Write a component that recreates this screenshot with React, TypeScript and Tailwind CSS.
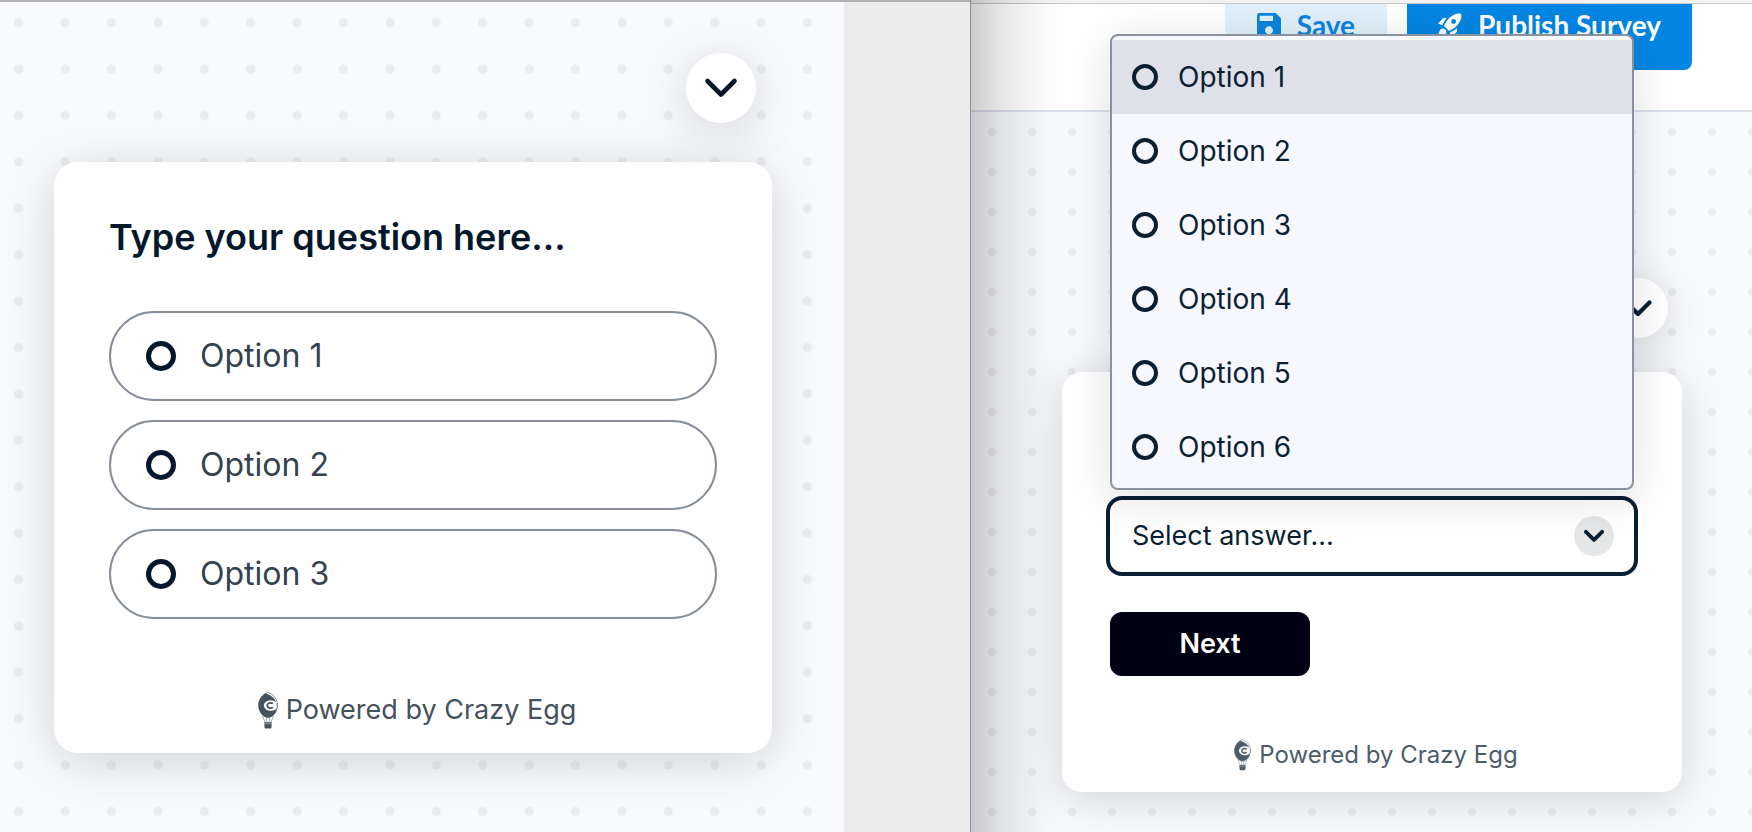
import { useId, useState } from "react";

const INLINE_OPTIONS = ["Option 1", "Option 2", "Option 3"];
const MENU_OPTIONS = ["Option 1", "Option 2", "Option 3", "Option 4", "Option 5", "Option 6"];

type DotGridProps = {
  size: number;
  cx: number;
  cy: number;
  r: number;
};

function DotGrid({ size, cx, cy, r }: DotGridProps) {
  const id = useId();

  return (
    <svg className="absolute inset-0 h-full w-full" aria-hidden="true">
      <defs>
        <pattern id={id} width={size} height={size} patternUnits="userSpaceOnUse">
          <circle cx={cx} cy={cy} r={r} fill="#ebecf0" />
        </pattern>
      </defs>
      <rect width="100%" height="100%" fill={`url(#${id})`} />
    </svg>
  );
}

function Chevron({ className, strokeWidth = 4.6 }: { className: string; strokeWidth?: number }) {
  return (
    <svg className={className} viewBox="0 0 32 20" fill="none" stroke="currentColor" strokeWidth={strokeWidth} overflow="visible" aria-hidden="true">
      <path strokeLinecap="round" strokeLinejoin="round" d="M2.5 3 16 16.5 29.5 3" />
    </svg>
  );
}

function BalloonLogo({ className }: { className: string }) {
  return (
    <svg className={className} viewBox="0 0 20 37" fill="none" aria-hidden="true">
      <path d="M10 .6c5.4 1 9.4 7 9.4 12.6 0 5.5-3.7 12.3-9.4 12.3S.6 18.7.6 13.2C.6 7.6 4.600 1.600 10 .6z" stroke="currentColor" strokeWidth={0.6} />
      <path d="M7.500 1.600C12.500 3 16.500 6 18 10l.6 8C17 22.500 14 25.500 10 25.500 4.300 25.500.5 18.700.5 13.200.5 8.400 3.600 3.400 7.500 1.600z" fill="currentColor" />
      <ellipse cx="12.800" cy="13.500" rx="7" ry="5.200" fill="#fff" />
      <path d="M15 11.600c-3-1.400-5.800-.4-5.800 1.900s2.800 3.300 5.800 1.900" stroke="currentColor" strokeWidth={1.700} />
      <path d="M19.200 11v5" stroke="currentColor" strokeWidth={0.8} />
      <path d="M4.500 24 7.300 30.500M15.500 24l-2.800 6.500M8.500 25.500l.3 5M11.500 25.500l-.3 5" stroke="currentColor" strokeWidth={0.5} />
      <path d="M6.200 30.200h7.600l-.4 5.200c0 .6-.5 1-1.200 1H7.800c-.7 0-1.200-.4-1.200-1z" fill="currentColor" />
      <path d="M6.500 31.700h7" stroke="#fff" strokeWidth={0.4} />
    </svg>
  );
}

function SaveIcon() {
  return (
    <svg className="size-6" viewBox="3 3 18 18" fill="currentColor" aria-hidden="true">
      <path d="M17 3H5a2 2 0 0 0-2 2v14a2 2 0 0 0 2 2h14c1.100 0 2-.9 2-2V7l-4-4zm-5 16c-1.660 0-3-1.340-3-3s1.340-3 3-3 3 1.340 3 3-1.340 3-3 3zm3-10H5V5h10v4z" />
    </svg>
  );
}

function RocketIcon() {
  return (
    <svg className="size-6" viewBox="2 2 20 20" fill="currentColor" aria-hidden="true">
      <path d="M9.190 6.350c-2.040 2.290-3.440 5.580-3.570 5.890L2 10.690l4.050-4.050c.47-.47 1.150-.68 1.810-.55l1.330.26zM11.170 17s3.740-1.550 5.890-3.700c5.400-5.400 4.500-9.620 4.210-10.570-.95-.3-5.170-1.190-10.570 4.210C8.550 9.090 7 12.830 7 12.830L11.170 17zm6.480-2.190c-2.290 2.040-5.580 3.440-5.890 3.570L13.310 22l4.050-4.050c.47-.47.68-1.150.55-1.810l-.26-1.330zM9 18c0 .83-.34 1.580-.88 2.120C6.940 21.300 2 22 2 22s.7-4.940 1.880-6.120A2.996 2.996 0 0 1 9 18zm4-9c0-1.100.9-2 2-2s2 .9 2 2-.9 2-2 2-2-.9-2-2z" />
    </svg>
  );
}

function RadioSurvey() {
  const [answer, setAnswer] = useState("");

  return (
    <section className="flex border-t-2 border-[#b0b0b0] bg-[#ebebeb]">
      <div className="relative flex-[844] bg-[#f9fafe]">
        <DotGrid size={46.4} cx={18.7} cy={20.7} r={4.7} />

        <div className="relative flex flex-col pt-[51px] pr-[72px] pl-[54px]">
          <button
            type="button"
            aria-label="Minimize survey"
            className="mr-4 flex size-[70px] items-center justify-center self-end rounded-full bg-white text-[#04172b] shadow-[0_8px_52px_rgba(0,0,0,0.16)]"
          >
            <Chevron className="h-5 w-8" />
          </button>

          <form className="mt-[39px] rounded-3xl bg-white px-[55px] pt-[51px] pb-[23px] shadow-[0_8px_52px_rgba(0,0,0,0.16)]">
            <h2 className="text-[36px] leading-[48px] font-semibold text-[#04172b]">Type your question here...</h2>

            <div className="mt-[50px] flex flex-col gap-[19px]">
              {INLINE_OPTIONS.map(option => (
                <label key={option} className="flex h-[90px] items-center gap-6 rounded-full border-2 border-[#868e99] pl-[35px] text-[32px] text-[#34424f]">
                  <input
                    type="radio"
                    name="inline-answer"
                    checked={answer === option}
                    onChange={() => setAnswer(option)}
                    className="size-[30px] appearance-none rounded-full border-[5px] border-[#04172b] checked:bg-[#04172b]"
                  />
                  {option}
                </label>
              ))}
            </div>

            <p className="mt-[71px] flex items-center justify-center gap-2 pl-2 text-[27px] leading-[40px] text-[#44515e]">
              <BalloonLogo className="h-[37px] w-5" />
              Powered by Crazy Egg
            </p>
          </form>
        </div>
      </div>
      <div className="flex-[126]" />
    </section>
  );
}

function DropdownSurvey() {
  const [isOpen, setIsOpen] = useState(true);
  const [answer, setAnswer] = useState("");

  const choose = (option: string) => {
    setAnswer(option);
    setIsOpen(false);
  };

  return (
    <section className="relative flex flex-col border-l border-[#8f929b] bg-[#f9fafe]">
      <div className="h-1 border-b border-[#c9c9c9] bg-[#f3f3f3]" />
      <header className="flex h-[108px] items-start justify-end gap-5 border-b-2 border-[#dde1ee] bg-white pr-[60px] font-['Lato',sans-serif] text-[28px] font-bold">
        <button type="button" className="flex h-[66px] items-center gap-4 rounded-b-lg bg-[#e1f0fa] px-8 pb-6 text-[#0b84e0]">
          <SaveIcon />
          Save
        </button>
        <button type="button" className="flex h-[66px] items-center gap-4 rounded-b-lg bg-[#0386e4] px-[31px] pb-6 text-white">
          <RocketIcon />
          Publish Survey
        </button>
      </header>

      <div className="relative flex-1">
        <DotGrid size={40} cx={21} cy={20} r={4} />

        <div className="relative flex flex-col pt-[166px] pr-[70px] pb-10 pl-[91px]">
          <button
            type="button"
            aria-label="Minimize survey"
            className="mr-[14px] flex size-[60px] items-center justify-center self-end rounded-full bg-white text-[#0b1f33] shadow-[0_7px_45px_rgba(0,0,0,0.16)]"
          >
            <Chevron className="h-[17px] w-7" strokeWidth={5} />
          </button>

          <form className="mt-[34px] rounded-[20px] bg-white px-11 pt-[124px] pb-[19px] shadow-[0_7px_45px_rgba(0,0,0,0.16)]">
            <div className="relative">
              <div className="flex h-20 items-center rounded-2xl border-4 border-[#0b1f33] pr-5 pl-[22px]">
                <select
                  aria-label="Select answer"
                  value={answer}
                  onMouseDown={event => {
                    event.preventDefault();
                    setIsOpen(open => !open);
                  }}
                  onChange={event => setAnswer(event.target.value)}
                  className="min-w-0 flex-1 appearance-none bg-transparent text-[27px] text-[#0b1f33] outline-none"
                >
                  <option value="">Select answer...</option>
                  {MENU_OPTIONS.map(option => (
                    <option key={option}>{option}</option>
                  ))}
                </select>
                <span className="flex size-10 items-center justify-center rounded-full bg-[#e5e7e9] text-[#0b1f33]">
                  <Chevron className="h-3 w-5" strokeWidth={6.4} />
                </span>
              </div>

              {isOpen && (
                <div className="absolute inset-x-1 bottom-full mb-[6px] rounded-lg border-2 border-[#8a92a0] bg-[#f6f8fd] py-1 shadow-[0_8px_50px_rgba(0,0,0,0.13)]">
                  {MENU_OPTIONS.map((option, index) => (
                    <label
                      key={option}
                      className={`flex h-[74px] items-center gap-5 pl-5 text-[28px] text-[#0b1f33] ${index === 0 ? "bg-[#dee1e9]" : "hover:bg-[#dee1e9]"}`}
                    >
                      <input
                        type="radio"
                        name="menu-answer"
                        checked={answer === option}
                        onChange={() => choose(option)}
                        className="size-[26px] appearance-none rounded-full border-4 border-[#0b1f33] checked:bg-[#0b1f33]"
                      />
                      {option}
                    </label>
                  ))}
                </div>
              )}
            </div>

            <button type="button" className="mt-9 ml-1 h-16 w-[200px] rounded-xl bg-[#000112] text-[27px] font-semibold text-white">
              Next
            </button>

            <p className="mt-[61px] flex items-center justify-center gap-2 pl-2 text-[24px] leading-9 text-[#4e5c6a]">
              <BalloonLogo className="h-8 w-[17px]" />
              Powered by Crazy Egg
            </p>
          </form>
        </div>
      </div>

      {/* shade cast by the window on the left */}
      <div className="pointer-events-none absolute inset-y-0 left-0 w-24 bg-[linear-gradient(to_right,rgba(0,0,0,0.2),rgba(0,0,0,0.09)_35%,rgba(0,0,0,0.02)_75%,transparent)]" />
    </section>
  );
}

export default function App() {
  return (
    <main className="grid min-h-screen grid-cols-[970fr_782fr] overflow-hidden font-['Inter','Liberation_Sans',sans-serif]">
      <RadioSurvey />
      <DropdownSurvey />
    </main>
  );
}
